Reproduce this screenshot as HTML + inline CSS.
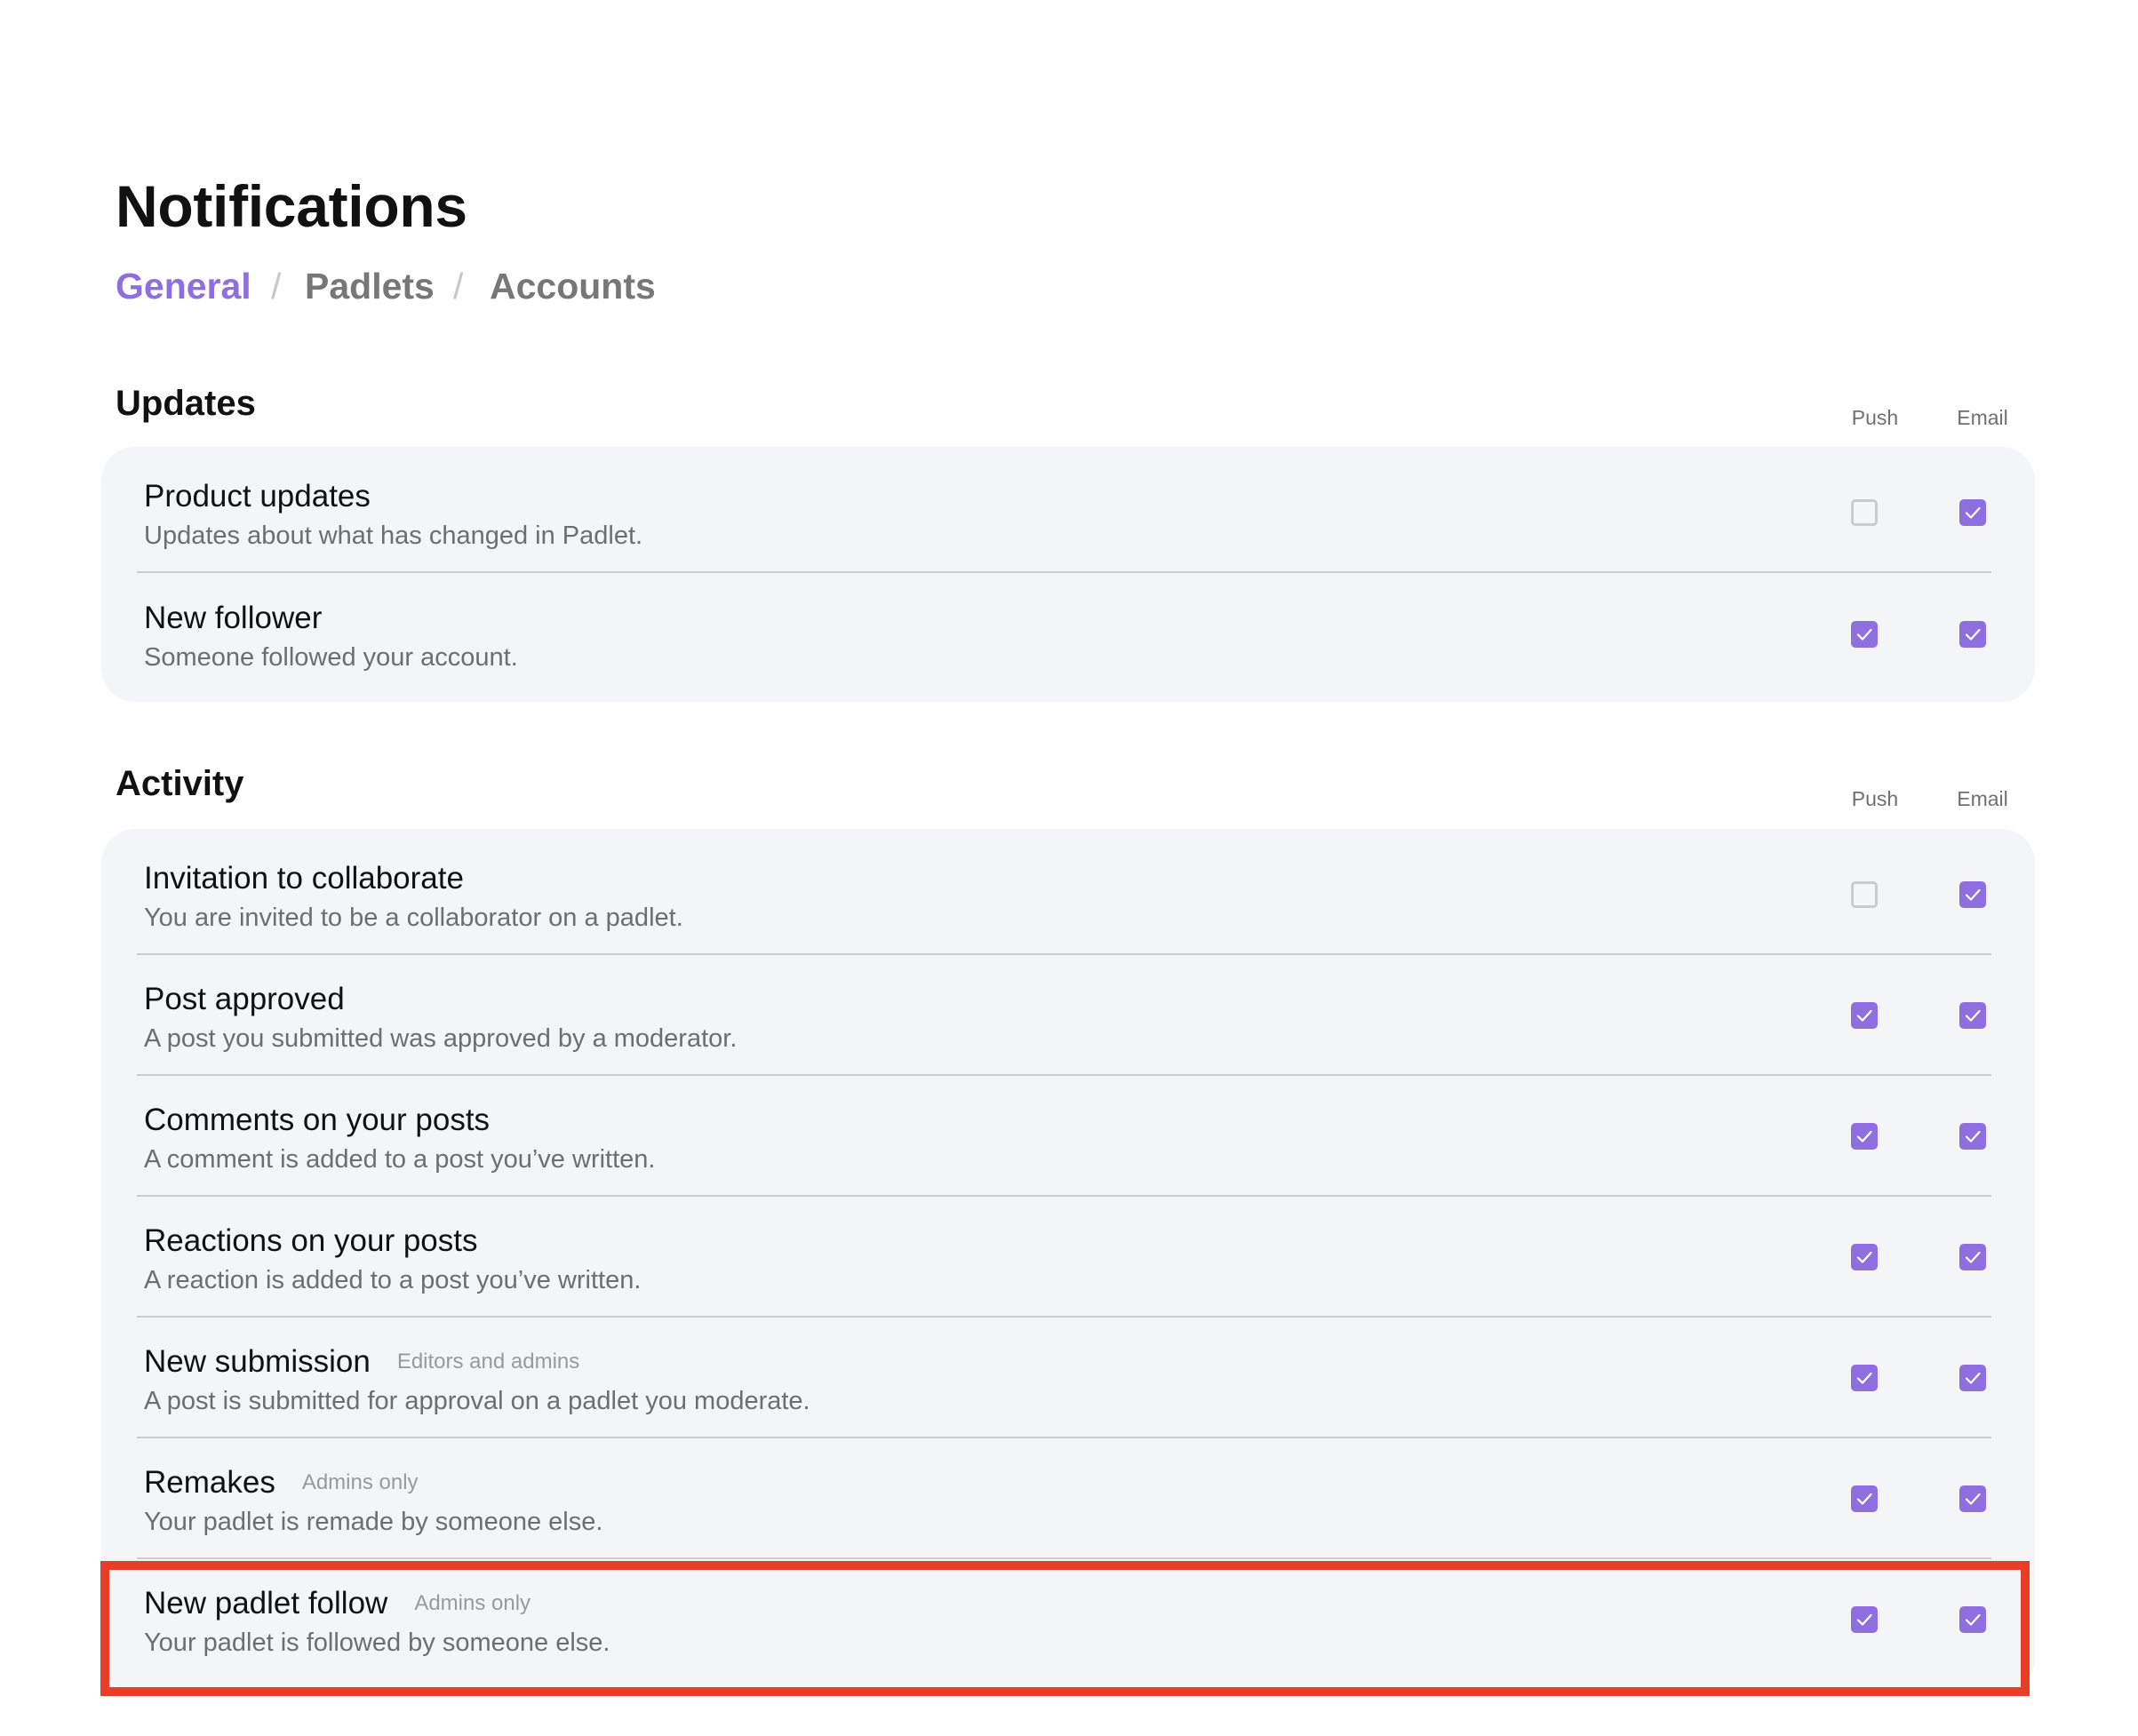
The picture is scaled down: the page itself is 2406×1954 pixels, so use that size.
<!DOCTYPE html>
<html><head><meta charset="utf-8"><style>
*{margin:0;padding:0;box-sizing:border-box}
body{width:2406px;height:1954px;background:#fff;font-family:"Liberation Sans",sans-serif;position:relative;overflow:hidden}
h1{position:absolute;left:130px;top:199px;font-size:66px;line-height:1;font-weight:700;color:#111;letter-spacing:-0.3px}
.tab{position:absolute;top:302px;font-size:41px;line-height:1;font-weight:700;color:#777}
.sh{position:absolute;left:130px;font-size:40px;line-height:1;font-weight:700;color:#111}
.lbl{position:absolute;font-size:23px;line-height:1;color:#707070;transform:translateX(-50%)}
.card{position:absolute;left:114px;width:2176px;background:#f4f5f7;border-radius:38px}
.row{position:absolute;left:0;width:2176px;height:136px}
.row .t{position:absolute;left:48px;top:32px;font-size:35px;line-height:1;color:#111;white-space:nowrap}
.row .t span{font-size:24px;color:#9a9a9a;margin-left:30px;position:relative;top:-4px}
.row .d{position:absolute;left:48px;top:80px;font-size:29px;line-height:1;color:#6e6e6e;white-space:nowrap}
.row .ln{position:absolute;left:40px;width:2087px;bottom:0;height:2px;background:#cdcdd2}
.cb{position:absolute;top:53px;width:30px;height:30px;border-radius:5px;background:#8f6fe0}
.cb svg{position:absolute;left:0;top:0}
.cb.off{background:transparent;border:3px solid #cbcbcb}
.p{left:1969px}.e{left:2091px}
.red{position:absolute;left:113px;top:1757px;width:2171px;height:152px;border:10px solid #e83e26}
</style></head><body>
<h1>Notifications</h1>
<div class="tab" style="left:130px;color:#8f6fe0">General</div>
<div class="tab" style="left:305px;color:#c8c8c8;font-weight:400">/</div>
<div class="tab" style="left:343px">Padlets</div>
<div class="tab" style="left:510px;color:#c8c8c8;font-weight:400">/</div>
<div class="tab" style="left:551px">Accounts</div>

<div class="sh" style="top:434px">Updates</div>
<div class="lbl" style="left:2110px;top:459px">Push</div>
<div class="lbl" style="left:2231px;top:459px">Email</div>

<div class="card" style="top:503px;height:287px">
 <div class="row" style="top:6px"><div class="t">Product updates</div><div class="d">Updates about what has changed in Padlet.</div>
  <div class="cb p off"></div><div class="cb e"><svg width="30" height="30"><path d="M8 15.5l5 5L22.5 10" stroke="#fff" stroke-width="2.2" fill="none" stroke-linecap="round" stroke-linejoin="round"/></svg></div><div class="ln"></div></div>
 <div class="row" style="top:143px"><div class="t">New follower</div><div class="d">Someone followed your account.</div>
  <div class="cb p"><svg width="30" height="30"><path d="M8 15.5l5 5L22.5 10" stroke="#fff" stroke-width="2.2" fill="none" stroke-linecap="round" stroke-linejoin="round"/></svg></div><div class="cb e"><svg width="30" height="30"><path d="M8 15.5l5 5L22.5 10" stroke="#fff" stroke-width="2.2" fill="none" stroke-linecap="round" stroke-linejoin="round"/></svg></div></div>
</div>

<div class="sh" style="top:862px">Activity</div>
<div class="lbl" style="left:2110px;top:888px">Push</div>
<div class="lbl" style="left:2231px;top:888px">Email</div>

<div class="card" style="top:933px;height:972px">
 <div class="row" style="top:6px"><div class="t">Invitation to collaborate</div><div class="d">You are invited to be a collaborator on a padlet.</div>
  <div class="cb p off"></div><div class="cb e"><svg width="30" height="30"><path d="M8 15.5l5 5L22.5 10" stroke="#fff" stroke-width="2.2" fill="none" stroke-linecap="round" stroke-linejoin="round"/></svg></div><div class="ln"></div></div>
 <div class="row" style="top:142px"><div class="t">Post approved</div><div class="d">A post you submitted was approved by a moderator.</div>
  <div class="cb p"><svg width="30" height="30"><path d="M8 15.5l5 5L22.5 10" stroke="#fff" stroke-width="2.2" fill="none" stroke-linecap="round" stroke-linejoin="round"/></svg></div><div class="cb e"><svg width="30" height="30"><path d="M8 15.5l5 5L22.5 10" stroke="#fff" stroke-width="2.2" fill="none" stroke-linecap="round" stroke-linejoin="round"/></svg></div><div class="ln"></div></div>
 <div class="row" style="top:278px"><div class="t">Comments on your posts</div><div class="d">A comment is added to a post you’ve written.</div>
  <div class="cb p"><svg width="30" height="30"><path d="M8 15.5l5 5L22.5 10" stroke="#fff" stroke-width="2.2" fill="none" stroke-linecap="round" stroke-linejoin="round"/></svg></div><div class="cb e"><svg width="30" height="30"><path d="M8 15.5l5 5L22.5 10" stroke="#fff" stroke-width="2.2" fill="none" stroke-linecap="round" stroke-linejoin="round"/></svg></div><div class="ln"></div></div>
 <div class="row" style="top:414px"><div class="t">Reactions on your posts</div><div class="d">A reaction is added to a post you’ve written.</div>
  <div class="cb p"><svg width="30" height="30"><path d="M8 15.5l5 5L22.5 10" stroke="#fff" stroke-width="2.2" fill="none" stroke-linecap="round" stroke-linejoin="round"/></svg></div><div class="cb e"><svg width="30" height="30"><path d="M8 15.5l5 5L22.5 10" stroke="#fff" stroke-width="2.2" fill="none" stroke-linecap="round" stroke-linejoin="round"/></svg></div><div class="ln"></div></div>
 <div class="row" style="top:550px"><div class="t">New submission<span>Editors and admins</span></div><div class="d">A post is submitted for approval on a padlet you moderate.</div>
  <div class="cb p"><svg width="30" height="30"><path d="M8 15.5l5 5L22.5 10" stroke="#fff" stroke-width="2.2" fill="none" stroke-linecap="round" stroke-linejoin="round"/></svg></div><div class="cb e"><svg width="30" height="30"><path d="M8 15.5l5 5L22.5 10" stroke="#fff" stroke-width="2.2" fill="none" stroke-linecap="round" stroke-linejoin="round"/></svg></div><div class="ln"></div></div>
 <div class="row" style="top:686px"><div class="t">Remakes<span>Admins only</span></div><div class="d">Your padlet is remade by someone else.</div>
  <div class="cb p"><svg width="30" height="30"><path d="M8 15.5l5 5L22.5 10" stroke="#fff" stroke-width="2.2" fill="none" stroke-linecap="round" stroke-linejoin="round"/></svg></div><div class="cb e"><svg width="30" height="30"><path d="M8 15.5l5 5L22.5 10" stroke="#fff" stroke-width="2.2" fill="none" stroke-linecap="round" stroke-linejoin="round"/></svg></div><div class="ln"></div></div>
 <div class="row" style="top:822px"><div class="t">New padlet follow<span>Admins only</span></div><div class="d">Your padlet is followed by someone else.</div>
  <div class="cb p"><svg width="30" height="30"><path d="M8 15.5l5 5L22.5 10" stroke="#fff" stroke-width="2.2" fill="none" stroke-linecap="round" stroke-linejoin="round"/></svg></div><div class="cb e"><svg width="30" height="30"><path d="M8 15.5l5 5L22.5 10" stroke="#fff" stroke-width="2.2" fill="none" stroke-linecap="round" stroke-linejoin="round"/></svg></div></div>
</div>
<div class="red"></div>
</body></html>
